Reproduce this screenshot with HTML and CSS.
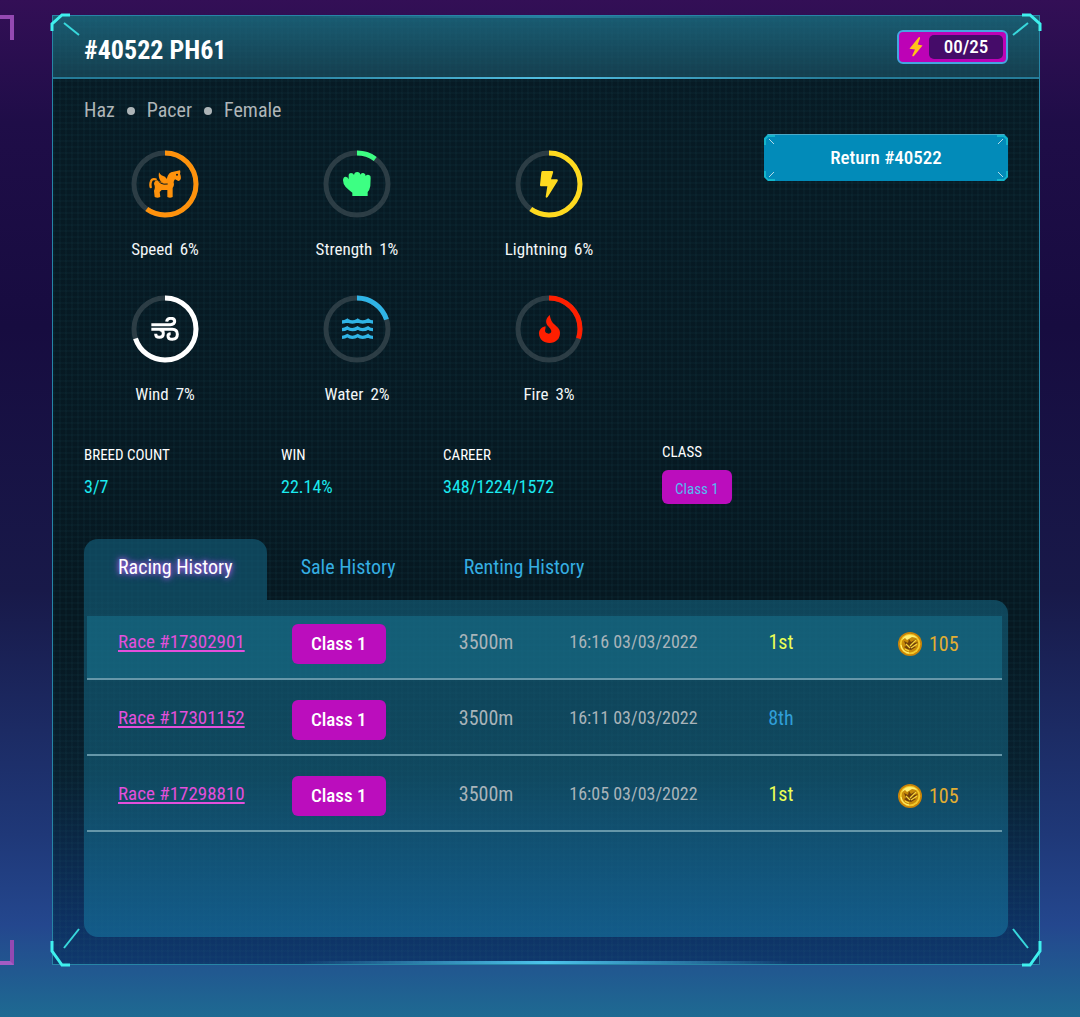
FILE: index.html
```html
<!DOCTYPE html>
<html lang="en">
<head>
  <meta charset="UTF-8" />
  <meta name="viewport" content="width=device-width, initial-scale=1" />
  <title>#40522 PH61</title>
  <link rel="stylesheet" href="styles.css">
</head>
<body>
  <svg class="defs" aria-hidden="true">
    <symbol id="corner" viewBox="0 0 30 40">
      <path d="M2 19V12L12 3H20" fill="none" stroke="#3ff0ee" stroke-width="3" />
      <path d="M14 11L29 23" fill="none" stroke="#38d8dc" stroke-width="2" />
    </symbol>
    <symbol id="corner-tall" viewBox="0 0 30 40">
      <path d="M2 27V17L12 3H20" fill="none" stroke="#3ff0ee" stroke-width="3" />
      <path d="M14 20L29 39" fill="none" stroke="#38d8dc" stroke-width="2" />
    </symbol>
    <symbol id="btn-corner" viewBox="0 0 12 12">
      <path d="M1 10V4L4 1H11" fill="none" stroke="#14b5cb" stroke-width="2" />
      <path d="M5 4L10 9" fill="none" stroke="#b5dbe8" stroke-width="1" />
    </symbol>
    <symbol id="coin" viewBox="0 0 24 24">
      <circle cx="12" cy="12" r="12" fill="#c98307" />
      <circle cx="12" cy="12" r="10.3" fill="#f3c92a" />
      <circle cx="12" cy="12" r="8.4" fill="#c68a0a" />
      <path d="M4 8Q6 3 12 3Q17 3 19 6L14 5L9 8L7 6Z" fill="#ffef72" />
      <path d="M6 9l4 2 1-4 2 3 5-3-2 4 4-1-4 4 2 1-5 3-4-1-3-2 2-1z" fill="#70400a" />
      <path d="M12 14l6-6M13 16l6-4M8 12l4 4M7 17l4 2" stroke="#f7d33a" stroke-width="1.3" />
      <path d="M3 13q1 7 8 8" fill="none" stroke="#fff07a" stroke-width="1" />
    </symbol>
  </svg>

  <div class="page">
    <aside class="side"></aside>

    <main class="card">
      <svg class="corner top-left"><use href="#corner" /></svg>
      <svg class="corner top-right"><use href="#corner" /></svg>
      <svg class="corner bottom-left"><use href="#corner-tall" /></svg>
      <svg class="corner bottom-right"><use href="#corner-tall" /></svg>

      <header class="card-header">
        <h1>#40522 PH61</h1>
        <div class="energy">
          <svg class="energy-icon" viewBox="0 0 40 58"><path d="M28 1L1 34L17 36L9 54Q10 58 14 55L39 25L25 22L32 3Q31 -1 28 1Z" fill="#ffc21a" /></svg>
          <span class="energy-value">00/25</span>
        </div>
      </header>

      <div class="card-body">
        <ul class="traits">
          <li>Haz</li>
          <li>Pacer</li>
          <li>Female</li>
        </ul>

        <div class="overview">
          <div class="stats">
            <div class="stat speed">
              <div class="ring">
                <svg class="ring-svg" viewBox="0 0 68 68"><circle class="track" cx="34" cy="34" r="31" /><circle class="value" cx="34" cy="34" r="31" pathLength="100" stroke-dasharray="60 100" /></svg>
                <svg class="icon" width="32" height="28" viewBox="0 0 96 84">
                  <path d="M15 42Q16 31 26 31L40 38Q50 34 54 24Q58 6 73 5L93 1Q95 6 93 11Q97 20 95 28Q90 36 84 31L78 28Q72 34 75 42Q75 50 71 54V81Q63 85 55 81V60H38L32 66L34 81Q25 85 17 81L15 62Q20 51 15 42Z" fill="currentColor" />
                  <path d="M30 7Q36 18 48 20Q57 28 56 38Q43 44 35 34Q27 23 30 7Z" fill="currentColor" />
                  <path d="M20 28Q9 25 6 34Q3 42 5 51" fill="none" stroke="currentColor" stroke-width="7" stroke-linecap="round" />
                  <path d="M25 26Q32 46 56 42" fill="none" stroke="#071a22" stroke-width="3" />
                  <circle cx="84" cy="14" r="3" fill="#071a22" />
                </svg>
              </div>
              <p>Speed <span>6%</span></p>
            </div>
            <div class="stat strength">
              <div class="ring">
                <svg class="ring-svg" viewBox="0 0 68 68"><circle class="track" cx="34" cy="34" r="31" /><circle class="value" cx="34" cy="34" r="31" pathLength="100" stroke-dasharray="10 100" /></svg>
                <svg class="icon" width="28" height="24" viewBox="0 0 84 72">
                  <path d="M0 25Q0 15 8 14Q15 14 17 22V8Q18 3 24 3Q31 3 33 9Q34 0 43 0Q51 0 52 8Q54 2 61 3Q68 4 68 12Q72 7 78 9Q84 11 83 18L82 42Q80 54 74 60V72H28V62Q16 53 8 45Q0 36 0 25Z" fill="currentColor" />
                </svg>
              </div>
              <p>Strength <span>1%</span></p>
            </div>
            <div class="stat lightning">
              <div class="ring">
                <svg class="ring-svg" viewBox="0 0 68 68"><circle class="track" cx="34" cy="34" r="31" /><circle class="value" cx="34" cy="34" r="31" pathLength="100" stroke-dasharray="60 100" /></svg>
                <svg class="icon" width="18" height="27" viewBox="0 0 54 81">
                  <path d="M8 0H36Q41 0 39 5L33 25H50Q55 26 53 30L23 78Q18 83 17 77L22 46H3Q0 46 0 42L4 4Q5 0 8 0Z" fill="currentColor" />
                </svg>
              </div>
              <p>Lightning <span>6%</span></p>
            </div>
            <div class="stat wind">
              <div class="ring">
                <svg class="ring-svg" viewBox="0 0 68 68"><circle class="track" cx="34" cy="34" r="31" /><circle class="value" cx="34" cy="34" r="31" pathLength="100" stroke-dasharray="70 100" /></svg>
                <svg class="icon" width="28" height="24" viewBox="0 0 84 72">
                  <path d="M1 23H58Q71 23 71 13Q71 4 60 4Q48 4 47 14M1 37H64Q79 37 79 52Q79 67 64 67Q51 67 51 56Q51 50 59 50M14 50Q14 61 25 61Q37 61 37 49Q37 38 26 38" fill="none" stroke="currentColor" stroke-width="9" />
                </svg>
              </div>
              <p>Wind <span>7%</span></p>
            </div>
            <div class="stat water">
              <div class="ring">
                <svg class="ring-svg" viewBox="0 0 68 68"><circle class="track" cx="34" cy="34" r="31" /><circle class="value" cx="34" cy="34" r="31" pathLength="100" stroke-dasharray="20 100" /></svg>
                <svg class="icon" width="31" height="22" viewBox="0 0 93 66">
                  <path d="M0 12Q8 12 16 7Q23 12 31 12Q39 12 47 7Q54 12 62 12Q70 12 78 7Q84 12 93 12M0 35Q8 35 16 30Q23 35 31 35Q39 35 47 30Q54 35 62 35Q70 35 78 30Q84 35 93 35M0 58Q8 58 16 53Q23 58 31 58Q39 58 47 53Q54 58 62 58Q70 58 78 53Q84 58 93 58" fill="none" stroke="currentColor" stroke-width="10" />
                </svg>
              </div>
              <p>Water <span>2%</span></p>
            </div>
            <div class="stat fire">
              <div class="ring">
                <svg class="ring-svg" viewBox="0 0 68 68"><circle class="track" cx="34" cy="34" r="31" /><circle class="value" cx="34" cy="34" r="31" pathLength="100" stroke-dasharray="30 100" /></svg>
                <svg class="icon" width="21" height="28" viewBox="0 0 62 82">
                  <path d="M32 0C20 10 19 20 24 29C30 37 38 42 36 50C33 57 20 56 18 48C17 42 21 38 19 33C6 36 0 44 0 54C1 72 14 82 31 82C50 82 62 70 62 52C62 38 48 32 40 22C35 15 33 8 32 0Z" fill="currentColor" />
                </svg>
              </div>
              <p>Fire <span>3%</span></p>
            </div>
          </div>

          <button class="return-btn" type="button">
            <svg class="btn-corner top-left"><use href="#btn-corner" /></svg>
            <svg class="btn-corner top-right"><use href="#btn-corner" /></svg>
            <svg class="btn-corner bottom-left"><use href="#btn-corner" /></svg>
            <svg class="btn-corner bottom-right"><use href="#btn-corner" /></svg>
            Return #40522
          </button>
        </div>

        <dl class="summary">
          <div>
            <dt>BREED COUNT</dt>
            <dd>3/7</dd>
          </div>
          <div>
            <dt>WIN</dt>
            <dd>22.14%</dd>
          </div>
          <div>
            <dt>CAREER</dt>
            <dd>348/1224/1572</dd>
          </div>
          <div class="summary-class">
            <dt>CLASS</dt>
            <dd><span class="class-tag">Class 1</span></dd>
          </div>
        </dl>

        <nav class="tabs">
          <button class="tab active" type="button">Racing History</button>
          <button class="tab" type="button">Sale History</button>
          <button class="tab" type="button">Renting History</button>
        </nav>

        <section class="history">
          <table>
            <colgroup>
              <col class="col-race"><col><col><col><col><col>
            </colgroup>
            <tbody>
              <tr class="selected">
                <td class="race"><a href="#17302901">Race #17302901</a></td>
                <td class="class"><span class="race-class">Class 1</span></td>
                <td>3500m</td>
                <td class="date">16:16 03/03/2022</td>
                <td class="first">1st</td>
                <td class="prize"><span><svg class="coin"><use href="#coin" /></svg>105</span></td>
              </tr>
              <tr>
                <td class="race"><a href="#17301152">Race #17301152</a></td>
                <td class="class"><span class="race-class">Class 1</span></td>
                <td>3500m</td>
                <td class="date">16:11 03/03/2022</td>
                <td class="place">8th</td>
                <td class="prize"></td>
              </tr>
              <tr>
                <td class="race"><a href="#17298810">Race #17298810</a></td>
                <td class="class"><span class="race-class">Class 1</span></td>
                <td>3500m</td>
                <td class="date">16:05 03/03/2022</td>
                <td class="first">1st</td>
                <td class="prize"><span><svg class="coin"><use href="#coin" /></svg>105</span></td>
              </tr>
            </tbody>
          </table>
        </section>
      </div>
    </main>
  </div>
</body>
</html>
```
FILE: styles.css
```css
* {
  box-sizing: border-box;
}
html {
  min-height: 100%;
  background: linear-gradient(180deg, #330f56 0%, #1f0d48 12%, #170c40 32%, #181949 58%, #1f3878 82%, #24478e 91%, #1e6a92 100%);
}
body {
  margin: 0;
  font-family: "Roboto Condensed", "Liberation Sans Narrow", Roboto, sans-serif;
  font-size: 20px;
  line-height: 28px;
  color: #fff;
}
h1, p, ul, dl, dd {
  margin: 0;
  padding: 0;
}
button {
  font: inherit;
  border: none;
  cursor: pointer;
}
.defs {
  display: none;
}
.page {
  display: flex;
  gap: 38px;
  padding: 15px 40px 52px 0;
}

/* edge of the neighbouring card */
.side {
  display: flex;
  flex: 0 0 14px;
  flex-direction: column;
  justify-content: space-between;
}
.side::before,
.side::after {
  content: "";
  height: 21px;
  border-right: 4px solid #9449b2;
}
.side::before {
  border-top: 4px solid #9449b2;
}
.side::after {
  border-bottom: 4px solid #a45cc4;
}

/* card */
.card {
  position: relative;
  flex: 1;
  min-width: 0;
  border: 1px solid #2785a6;
  background:
    linear-gradient(90deg, transparent 25%, #3bb4e0 50%, transparent 75%) top / 100% 2px no-repeat,
    linear-gradient(90deg, transparent 25%, #4cc4ec 50%, transparent 75%) bottom / 100% 3px no-repeat,
    repeating-linear-gradient(0deg, rgba(40, 110, 125, 0.06) 0 2px, transparent 2px 6px),
    repeating-linear-gradient(90deg, rgba(40, 110, 125, 0.06) 0 2px, transparent 2px 6px),
    linear-gradient(180deg, #071b25 0%, #061821 65%, #08202f 80%, #0d3060 95%, #0f386d 100%);
}
.corner {
  position: absolute;
  width: 30px;
  height: 40px;
}
.corner.top-left {
  top: -4px;
  left: -3px;
}
.corner.top-right {
  top: -4px;
  right: -3px;
  transform: scaleX(-1);
}
.corner.bottom-left {
  bottom: -4px;
  left: -3px;
  transform: scaleY(-1);
}
.corner.bottom-right {
  right: -3px;
  bottom: -4px;
  transform: scale(-1);
}
.card-header {
  display: flex;
  align-items: center;
  justify-content: space-between;
  height: 63px;
  padding: 0 31px;
  border-bottom: 2px solid;
  border-image: linear-gradient(90deg, #257b98, #257b98 20%, #52bde0 50%, #257b98 80%, #257b98) 1;
  background: linear-gradient(180deg, rgba(31, 113, 139, 0.75), rgba(29, 85, 105, 0.6));
}
h1 {
  font-size: 26px;
  line-height: 36px;
  padding-top: 6px;
}
.energy {
  display: flex;
  align-items: center;
  width: 111px;
  height: 34px;
  padding: 0 3px 0 10px;
  border: 2px solid #45a5e0;
  border-radius: 6px;
  background: #bd02b6;
}
.energy-icon {
  width: 14px;
  height: 20px;
  margin-right: 6px;
}
.energy-value {
  flex: 1;
  border-radius: 5px;
  background: #450c69;
  font-size: 19px;
  font-weight: 500;
  line-height: 24px;
  text-align: center;
}
.card-body {
  padding: 17px 31px 27px;
}
.traits {
  display: flex;
  list-style: none;
  color: #aeb5b8;
}
.traits li + li::before {
  content: "";
  display: inline-block;
  width: 8px;
  height: 8px;
  margin: 0 12px 2px;
  border-radius: 50%;
  background: #aeb5b8;
}

/* stats */
.overview {
  display: flex;
  align-items: flex-start;
  justify-content: space-between;
  padding-top: 10px;
}
.stats {
  display: grid;
  grid-template-columns: repeat(3, 162px);
  gap: 32px 30px;
  padding-top: 16px;
}
.stat {
  text-align: center;
  font-size: 17px;
}
.stat p {
  padding-top: 17px;
  color: #f2f6f7;
}
.stat p span {
  margin-left: 3px;
}
.ring {
  display: grid;
  place-items: center;
  width: 68px;
  height: 68px;
  margin: 0 auto;
}
.ring-svg,
.icon {
  grid-area: 1 / 1;
}
.ring-svg {
  width: 68px;
  height: 68px;
  transform: rotate(-90deg);
}
.ring circle.track,
.ring circle.value {
  fill: none;
  stroke-width: 5;
}
.ring circle.track {
  stroke: #2c3d45;
}
.ring circle.value {
  stroke: currentColor;
}
.speed {
  color: #ff920c;
}
.strength {
  color: #3dff83;
}
.lightning {
  color: #ffda1f;
}
.wind {
  color: #fff;
}
.water {
  color: #2fb4e6;
}
.fire {
  color: #ff1f00;
}
.return-btn {
  position: relative;
  width: 244px;
  height: 47px;
  border-top: 1px solid #4aa9c8;
  background: #028bb9;
  color: #fff;
  font-size: 19px;
  font-weight: 500;
  clip-path: polygon(4px 0, calc(100% - 4px) 0, 100% 4px, 100% calc(100% - 4px), calc(100% - 4px) 100%, 4px 100%, 0 calc(100% - 4px), 0 4px);
}
.btn-corner {
  position: absolute;
  width: 12px;
  height: 12px;
}
.btn-corner.top-left {
  top: 0;
  left: 0;
}
.btn-corner.top-right {
  top: 0;
  right: 0;
  transform: scaleX(-1);
}
.btn-corner.bottom-left {
  bottom: 0;
  left: 0;
  transform: scaleY(-1);
}
.btn-corner.bottom-right {
  right: 0;
  bottom: 0;
  transform: scale(-1);
}

/* summary */
.summary {
  display: grid;
  grid-template-columns: 197fr 162fr 219fr 346fr;
  padding-top: 30px;
}
.summary dt {
  padding-top: 3px;
  font-size: 15px;
}
.summary dd {
  padding-top: 4px;
  color: #1beaf0;
  font-size: 18px;
}
.summary .summary-class dt {
  padding-top: 0;
}
.class-tag {
  display: inline-block;
  padding: 4px 13px 0;
  border-radius: 6px;
  background: #bb0dbd;
  color: #54bdf0;
  font-size: 15px;
  line-height: 30px;
}

/* history */
.tabs {
  display: flex;
  padding-top: 35px;
}
.tab {
  padding: 0 34px 5px;
  height: 61px;
  border-radius: 14px 14px 0 0;
  background: none;
  color: #35aee2;
}
.tab.active {
  background: rgba(20, 96, 124, 0.62);
  color: #fff;
  text-shadow: 0 0 5px #b96bff, 0 0 8px #8b46d8;
}
.history {
  min-height: 337px;
  padding: 16px 6px 0 3px;
  border-radius: 0 14px 14px 14px;
  background: linear-gradient(180deg, rgba(20, 96, 124, 0.62), rgba(20, 96, 124, 0.62) 50%, rgba(21, 108, 152, 0.7));
}
table {
  width: 100%;
  table-layout: fixed;
  border-collapse: collapse;
}
.col-race {
  width: 178px;
}
td {
  padding: 20px 0 22px;
  border-bottom: 2px solid #6697a9;
  color: #a9b4ba;
  text-align: center;
  vertical-align: bottom;
}
.selected {
  background: rgba(27, 124, 153, 0.45);
}
.selected td {
  padding-top: 8px;
}
td.race {
  padding-left: 31px;
  text-align: left;
}
.race a {
  color: #e34fdc;
  font-size: 19px;
  text-decoration-thickness: 2px;
  text-underline-offset: 2px;
}
td.date {
  font-size: 18px;
}
td.class,
td.prize {
  padding-bottom: 14px;
}
.race-class {
  display: block;
  width: 94px;
  margin: 0 auto;
  border-radius: 6px;
  background: #bb0dbd;
  color: #fff;
  font-size: 19px;
  font-weight: 500;
  line-height: 40px;
}
td.first {
  color: #ecff55;
}
td.place {
  color: #309fd8;
}
td.prize {
  color: #e2ae32;
}
.prize span {
  display: flex;
  align-items: center;
  justify-content: center;
  gap: 7px;
  height: 40px;
}
.coin {
  width: 24px;
  height: 24px;
}
```
